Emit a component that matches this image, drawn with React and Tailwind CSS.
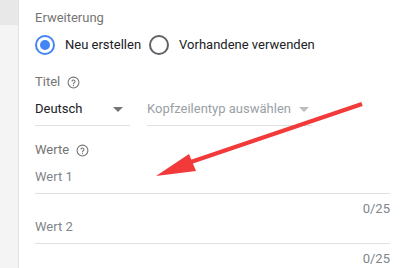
import React from "react";

function HelpIcon() {
  return (
    <svg width="13" height="13" viewBox="0 0 24 24" className="text-[#757575]">
      <circle cx="12" cy="12" r="10" fill="none" stroke="currentColor" strokeWidth="2" />
      <path
        d="M9.2 9.3a2.9 2.9 0 0 1 5.6 0.9c0 2-2.8 2.3-2.8 4.3"
        fill="none"
        stroke="currentColor"
        strokeWidth="2"
        strokeLinecap="round"
      />
      <circle cx="12" cy="17.6" r="1.2" fill="currentColor" />
    </svg>
  );
}

function Caret({ light }) {
  return (
    <svg width="10" height="5" viewBox="0 0 10 5">
      <path d="M0 0h10L5 5z" fill={light ? "#bdbdbd" : "#757575"} />
    </svg>
  );
}

function Radio({ checked, label }) {
  return (
    <label className="flex items-center gap-[10px]">
      <span
        className={
          "flex h-5 w-5 items-center justify-center rounded-full border-2 " +
          (checked ? "border-[#4285f4]" : "border-[#5f6368]")
        }
      >
        {checked && <span className="h-[10px] w-[10px] rounded-full bg-[#4285f4]" />}
      </span>
      <span className="text-[13px] text-[#202124]">{label}</span>
    </label>
  );
}

function ValueField({ label }) {
  return (
    <div>
      <div className="border-b border-[#e0e0e0] pb-[6px] text-[13px] leading-5 text-[#80868b]">
        {label}
      </div>
      <div className="mt-[7px] text-right text-[13px] leading-4 text-[#80868b]">0/25</div>
    </div>
  );
}

export default function App() {
  return (
    <div
      className="relative flex h-[268px] w-[417px] overflow-hidden bg-white"
      style={{ fontFamily: "Roboto, 'Liberation Sans', sans-serif" }}
    >
      {/* left rail */}
      <div className="flex w-[19px] flex-col border-r border-[#e3e3e3] bg-[#f4f4f4]">
        <div className="h-[25px] bg-[#e8e8e8]" />
      </div>

      <div className="flex-1 pl-[16px] pr-[27px] pt-[8px]">
        <div className="text-[13px] leading-5 text-[#757575]">Erweiterung</div>

        <div className="mt-[7px] flex items-center gap-[8px]">
          <Radio checked label="Neu erstellen" />
          <Radio label="Vorhandene verwenden" />
        </div>

        <div className="mt-[17px] flex items-center gap-[7px] text-[13px] leading-5 text-[#757575]">
          Titel <HelpIcon />
        </div>

        <div className="mt-[7px] flex gap-[17px]">
          <div className="flex w-[95px] items-center justify-between border-b border-[#e0e0e0] pb-[6px] pr-[7px]">
            <span className="text-[13px] leading-5 text-[#202124]">Deutsch</span>
            <Caret />
          </div>
          <div className="flex w-[165px] items-center gap-[8px] border-b border-[#e0e0e0] pb-[6px]">
            <span className="whitespace-nowrap text-[13px] leading-5 text-[#9aa0a6]">
              Kopfzeilentyp auswählen
            </span>
            <Caret light />
          </div>
        </div>

        <div className="mt-[14px] flex items-center gap-[7px] text-[13px] leading-5 text-[#757575]">
          Werte <HelpIcon />
        </div>

        <div className="mt-[7px]">
          <ValueField label="Wert 1" />
        </div>
        <div>
          <ValueField label="Wert 2" />
        </div>
      </div>

      {/* annotation arrow */}
      <svg
        className="pointer-events-none absolute left-0 top-0"
        width="417"
        height="268"
        viewBox="0 0 417 268"
      >
        <line x1="362" y1="104" x2="185" y2="164" stroke="#f23a3a" strokeWidth="4" />
        <path d="M156 176 L189 154 L196 171 Z" fill="#f23a3a" />
      </svg>
    </div>
  );
}
